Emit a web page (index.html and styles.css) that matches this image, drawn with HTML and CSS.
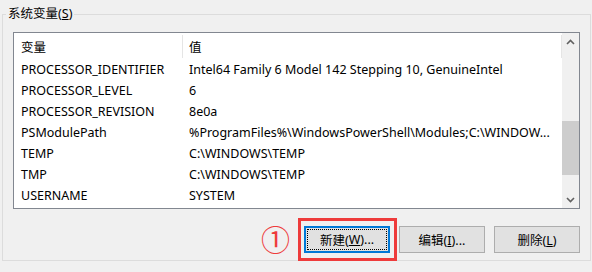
FILE: index.html
```html
<!DOCTYPE html>
<html>
<head>
	<meta charset="utf-8">
	<title>系统变量</title>
	<link rel="stylesheet" href="styles.css">
</head>
<body>
	<fieldset class="group">
		<legend>系统变量(<u>S</u>)</legend>
		<div class="list">
			<div class="list-main">
				<div class="row head">
					<span class="c1">变量</span>
					<span class="c2">值</span>
				</div>
				<div class="row"><span class="c1">PROCESSOR_IDENTIFIER</span><span class="c2">Intel64 Family 6 Model 142 Stepping 10, GenuineIntel</span></div>
				<div class="row"><span class="c1">PROCESSOR_LEVEL</span><span class="c2">6</span></div>
				<div class="row"><span class="c1">PROCESSOR_REVISION</span><span class="c2">8e0a</span></div>
				<div class="row"><span class="c1">PSModulePath</span><span class="c2">%ProgramFiles%\WindowsPowerShell\Modules;C:\WINDOW...</span></div>
				<div class="row"><span class="c1">TEMP</span><span class="c2">C:\WINDOWS\TEMP</span></div>
				<div class="row"><span class="c1">TMP</span><span class="c2">C:\WINDOWS\TEMP</span></div>
				<div class="row"><span class="c1">USERNAME</span><span class="c2">SYSTEM</span></div>
			</div>
			<div class="scroll">
				<div class="arrow">
					<svg width="9" height="6" viewBox="0 0 9 6"><polyline points="1,5 4.5,1.5 8,5" fill="none" stroke="#606060" stroke-width="1.6"/></svg>
				</div>
				<div class="track"><div class="thumb"></div></div>
				<div class="arrow">
					<svg width="9" height="6" viewBox="0 0 9 6"><polyline points="1,1 4.5,4.5 8,1" fill="none" stroke="#606060" stroke-width="1.6"/></svg>
				</div>
			</div>
		</div>
		<div class="actions">
			<span class="mark">①</span>
			<span class="highlight">
				<button class="btn focused"><span class="focus-ring">新建(<u>W</u>)...</span></button>
			</span>
			<button class="btn">编辑(<u>I</u>)...</button>
			<button class="btn">删除(<u>L</u>)</button>
		</div>
	</fieldset>
</body>
</html>
```

FILE: styles.css
```css
body{
	margin:0px;
	background-color:#f0f0f0;
	font-family:"Noto Sans","Noto Sans CJK SC",sans-serif;
	font-size:12.5px;
	color:#000;
}
.group{
	margin:6px 1px 3px 2px;
	padding:0px;
	border:1px solid #dcdcdc;
	height:253px;
}
.group legend{
	margin-left:3px;
	padding:0px 2px;
	line-height:16px;
	height:16px;
}
.list{
	margin:10px 10px 0px 10px;
	border:1px solid #828790;
	background-color:#fff;
	height:175px;
	display:flex;
}
.list-main{
	flex:1;
}
.row{
	display:flex;
	height:21px;
	align-items:center;
	white-space:nowrap;
}
.row .c1{
	width:162px;
	padding-left:7px;
}
.row .c2{
	padding-left:6px;
	flex:1;
	overflow:hidden;
}
.head{
	height:26px;
	align-items:stretch;
}
.head .c1,.head .c2{
	display:flex;
	align-items:center;
	margin:2px 0px 1px 0px;
	border-right:1px solid #e5e5e5;
}
.head .c1{
	width:161px;
}
.scroll{
	width:17px;
	display:flex;
	flex-direction:column;
	background-color:#f0f0f0;
}
.arrow{
	height:17px;
	display:flex;
	align-items:center;
	justify-content:center;
}
.track{
	flex:1;
}
.thumb{
	margin-top:71px;
	height:54px;
	background-color:#cdcdcd;
}
.actions{
	display:flex;
	justify-content:flex-end;
	align-items:center;
	gap:9px;
	margin:17px 10px 0px 0px;
}
.mark{
	width:28px;
	text-align:center;
	font-size:29px;
	line-height:27px;
	color:#ee3b3b;
	margin-right:6px;
}
.highlight{
	position:relative;
	display:flex;
}
.highlight::after{
	content:"";
	position:absolute;
	top:-8px;
	bottom:-8px;
	left:-6px;
	right:-7px;
	border:3px solid #ee3b3b;
}
.btn{
	width:86px;
	height:27px;
	padding:0px;
	border:1px solid #adadad;
	background-color:#e1e1e1;
	font-family:inherit;
	font-size:12.5px;
	color:#000;
}
.btn.focused{
	border:2px solid #0078d7;
	padding:1px;
	display:flex;
}
.focus-ring{
	flex:1;
	display:flex;
	align-items:center;
	justify-content:center;
	border:1px dotted #000;
}
```
